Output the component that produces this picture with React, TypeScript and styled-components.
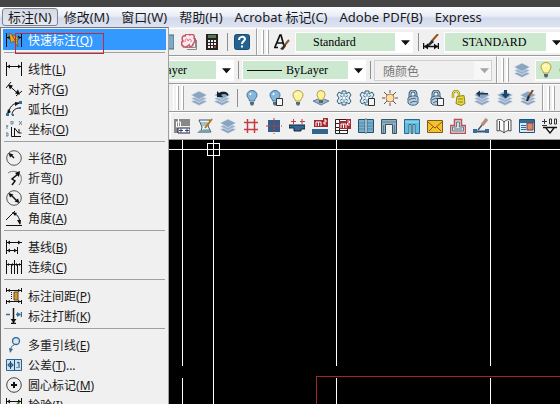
import React from "react";
import styled, { createGlobalStyle } from "styled-components";

const Global = createGlobalStyle`
  * { box-sizing: border-box; }
  body { margin: 0; background: #000; font-family: "Noto Sans", "Noto Sans CJK SC", sans-serif; font-size: 12px; color: #1a1a1a; overflow: hidden; }
  button, select { font: inherit; color: inherit; border: 0; padding: 0; margin: 0; background: none; }
  svg { display: block; flex: none; }
`;

const Page = styled.div`
  display: flex;
  flex-direction: column;
  height: 100vh;
  overflow: hidden;
  position: relative;
`;
const TitleStrip = styled.div`
  height: 7px;
  flex: none;
  background: #444;
`;
const MenuBar = styled.nav`
  display: flex;
  flex: none;
  height: 21px;
  padding: 1px 2px;
  white-space: nowrap;
  background: linear-gradient(#fbfcfe, #e9edf7 45%, #d3daec 55%, #dde3f2);
  border-bottom: 1px solid #f0f0f0;
`;
const MenuBarButton = styled.button<{ $open?: boolean }>`
  padding: 0 5px;
  font-size: 13px;
  line-height: 16px;
  border: 1px solid ${(p) => (p.$open ? "#7d8290" : "transparent")};
  border-radius: 3px;
  background: ${(p) => (p.$open ? "linear-gradient(#d5d9e4, #e6e9f2)" : "none")};
`;

const ToolRow = styled.div<{ $start: number }>`
  display: flex;
  flex: none;
  height: 28px;
  padding-left: ${(p) => p.$start}px;
  background: #f0f0f0;
  overflow: hidden;
  border-bottom: 1px solid #9a9a9a;
`;
const Panel = styled.div<{ $gap?: number; $grow?: boolean; $pad?: number }>`
  display: flex;
  flex: ${(p) => (p.$grow ? "1 0 auto" : "none")};
  align-items: center;
  gap: ${(p) => p.$gap ?? 7}px;
  padding: 0 ${(p) => (p.$gap === 4 ? 4 : 6)}px 0 ${(p) => p.$pad ?? 3}px;
  border-top: 1px solid #fff;
  border-left: 1px solid #fff;
  border-right: 1px solid #a0a0a0;
`;
const Grip = styled.span`
  display: block;
  flex: none;
  width: 8px;
  align-self: stretch;
  margin: 1px 0;
  background: linear-gradient(90deg, #fff 2px, #a5a5a5 2px 3px, #f0f0f0 3px 5px, #fff 5px 7px, #a5a5a5 7px);
`;
const Divider = styled.span`
  flex: none;
  width: 1px;
  height: 18px;
  margin-right: -1px;
  background: #8f8f8f;
`;
const ToolButton = styled.button`
  flex: none;
  width: 16px;
  height: 16px;
`;
const Combo = styled.label<{ $width?: number; $off?: boolean }>`
  display: flex;
  align-items: center;
  flex: ${(p) => (p.$width ? "none" : "1 0 120px")};
  width: ${(p) => (p.$width ? `${p.$width}px` : "auto")};
  height: 21px;
  padding-right: 2px;
  border: 1px solid ${(p) => (p.$off ? "#cfcfcf" : "#fff")};
  background: ${(p) => (p.$off ? "#f7f7f7" : "#fff")};
`;
const Field = styled.span<{ $off?: boolean; $indent: number }>`
  display: flex;
  align-items: center;
  gap: 4px;
  flex: 1;
  min-width: 0;
  height: 18px;
  margin-right: 6px;
  padding-left: ${(p) => p.$indent}px;
  background: ${(p) => (p.$off ? "#f0f0f0" : "#cce8cf")};
`;
const Select = styled.select<{ $off?: boolean }>`
  appearance: none;
  flex: 1;
  min-width: 0;
  height: 18px;
  font-family: ${(p) => (p.$off ? '"Noto Sans CJK SC", sans-serif' : '"Liberation Serif", serif')};
  font-size: 12px;
  color: ${(p) => (p.$off ? "#777" : "#000")};
  opacity: 1;
`;

const Menu = styled.ul`
  position: absolute;
  top: 27px;
  left: 0;
  width: 169px;
  margin: 0;
  padding: 1px 2px;
  list-style: none;
  background: #f0f0f0;
  border: 1px solid #777;
  border-right-color: #a0a0a0;
`;
const Item = styled.li`
  display: block;
`;
const ItemButton = styled.button<{ $active?: boolean }>`
  display: flex;
  align-items: center;
  gap: 6px;
  width: 100%;
  height: ${(p) => (p.$active ? 21 : 20)}px;
  padding-left: 3px;
  white-space: nowrap;
  text-align: left;
  color: ${(p) => (p.$active ? "#fff" : "#1a1a1a")};
  background: ${(p) => (p.$active ? "#3399ff" : "none")};
`;
const Rule = styled.li`
  height: 1px;
  margin: 2px 1px 6px;
  background: #a0a0a0;
`;
const Marker = styled.div`
  position: absolute;
  top: 33px;
  left: 15px;
  width: 89px;
  height: 21px;
  border: 1px solid #c8283c;
  pointer-events: none;
`;
const Canvas = styled.main`
  flex: 1;
  min-height: 0;
  overflow: hidden;
  background: #000;
`;

const k = "#111";
const layers = (
  <>
    <path d="M0 11.500l8-3.500 8 3.500-8 4z" fill="#8da5c2" stroke="#dfe8f1" strokeWidth=".6" />
    <path d="M0 8.500L8 5l8 3.500-8 4z" fill="#9cb2cc" stroke="#e8eff6" strokeWidth=".6" />
    <path d="M0 5l8-4 8 4-8 4.500z" fill="#8ba4bf" stroke="#e8eff6" strokeWidth=".6" />
  </>
);
const bulb = (fill: string, edge: string) => (
  <>
    <path d="M5.500 11C5.500 8.500 3 8 3 5a5 4.500 0 0 1 10 0c0 3-2.500 3.500-2.500 6z" fill={fill} stroke={edge} />
    <path d="M6 5l1-2" stroke="#fff" strokeWidth="1.500" />
    <path d="M6 12h4v2l-1 1.500H7L6 14z" fill="#54687c" />
  </>
);
const sheet = <path d="M9.500 8.500h6v7h-6z" fill="#f5f5f5" stroke="#333" />;
const snow = (
  <>
    <path d="M6 1h4v3l3-2 2 3-2 3 2 3-2 3-3-2v3H6v-3l-3 2-2-3 2-3-2-3 2-3 3 2z" fill="#dcebf3" stroke="#345a72" strokeWidth="1" />
    <path d="M8 3v10M4 5.500l8 5M4 10.500l8-5" stroke="#4d7c98" />
    <circle cx="8" cy="8" r="1.500" fill="#fff" />
  </>
);
const lock = (c: string, e: string) => (
  <>
    <path d="M5 8V4a3 3 0 0 1 6 0v4" fill="none" stroke={e} strokeWidth="3" />
    <path d="M5 8V4a3 3 0 0 1 6 0v4" fill="none" stroke={c} />
    <path d="M3 8c2-2 7-3 10-1v6c-2 3-8 3-10 0z" fill={c} stroke={e} />
    <path d="M4 10c3-2 5-2 7-1M5 13c3-2 5-2 7-1" stroke={e} fill="none" />
  </>
);
const dims = (
  <>
    <path d="M.5 1v14M15.500 1v14M1 5.500h14" stroke={k} fill="none" />
    <path d="M1 5.500l3-2v4zM15 5.500l-3-2v4z" fill={k} />
  </>
);

const icons: Record<string, React.ReactNode> = {
  quick: (
    <>
      {dims}
      <path d="M3 1l10 5-2 1 1 8-4-6-3 2z" fill="#e8aa22" stroke="#6a511d" strokeWidth=".7" />
      <path d="M6 3l4 7" stroke="#725314" />
    </>
  ),
  linear: dims,
  aligned: (
    <>
      <path d="M0 7l5-6M10 15l6-5M3 4.500l9 8" stroke={k} fill="none" />
      <path d="M2 3.500l5 1-3 4zM14 13.500l-5-1 3-4z" fill={k} />
    </>
  ),
  arc: (
    <>
      <path d="M6 14c0-4 3-7 8-7M3 12C3 6 7 2 13 2" stroke={k} fill="none" />
      <path d="M1 13l1-5 3 3zM14 2L9 1v4z" fill={k} />
      <path d="M0 12h3v3H0zM13 0h3v3h-3zM6 13h2v2H6zM13 6h2v2h-2z" fill="#326f9d" />
    </>
  ),
  ordinate: (
    <>
      <path d="M5.500 6v9.500H15M8.500 15V7l4 5h3M13 8v4" stroke={k} fill="none" />
      <path d="M0 4l1 2 1-2M1 6v2M5 0h2v3H5zM13 0l3 4M16 0l-3 4M0 12h2v3H0z" stroke="#3e6f92" fill="none" strokeWidth=".8" />
    </>
  ),
  radius: (
    <>
      <circle cx="8" cy="8" r="7.300" stroke="#555" fill="none" />
      <path d="M8 8L4 4" stroke={k} strokeWidth="1.500" />
      <path d="M2.500 3l5 1.500-3.500 3z" fill={k} />
    </>
  ),
  jogged: (
    <>
      <path d="M2 3c4-3 11-2 13 3 1 4 0 6-2 9" stroke="#777" fill="none" />
      <path d="M6 15l3-4-3-2 6-5" stroke={k} strokeWidth="1.500" fill="none" />
      <path d="M14 1l-1 6-4-4z" fill={k} />
    </>
  ),
  diameter: (
    <>
      <circle cx="8" cy="8" r="7.300" stroke="#555" fill="none" />
      <path d="M4 4l8 8" stroke={k} strokeWidth="1.500" />
      <path d="M2.500 3l5 1.500-3.500 3zM13.500 13l-5-1.500 3.500-3z" fill={k} />
    </>
  ),
  angular: (
    <>
      <path d="M0 15.500h16M0 10l9-9" stroke={k} fill="none" />
      <path d="M8 3c4 2 6 6 6 11" stroke={k} fill="none" />
      <path d="M6 2l5 1-2 3zM14 15l-3-5h4z" fill={k} />
    </>
  ),
  baseline: (
    <>
      <path d="M.5 1v14M1 3.500h15M1 11.500h10M11.500 8v7" stroke={k} fill="none" />
      <path d="M1 3.500l3-2v4zM15 3.500l-3-2v4zM1 11.500l3-2v4zM11 11.500l-3-2v4z" fill={k} />
    </>
  ),
  continued: (
    <>
      <path d="M.5 1v14M8.500 1v14M15.500 1v14M0 5.500h16M5.500 5v10M11.500 5v10" stroke={k} fill="none" />
      <path d="M1 5.500l2-1.500v3zM8 5.500l-2-1.500v3zM9 5.500l2-1.500v3zM15 5.500l-2-1.500v3z" fill={k} />
    </>
  ),
  spacing: (
    <>
      <path d="M.5 0v4M15.500 0v4M.5 12v4M15.500 12v4M1 2.500h14M1 13.500h14" stroke={k} />
      <path d="M5.500 4v8" stroke={k} strokeDasharray="1 1" />
      <path d="M8 4h4v8H8z" fill="#d49a32" stroke="#684a18" />
      <path d="M1 2.500l3-1.500v3zM15 2.500L12 1v3zM1 13.500L4 12v3zM15 13.500L12 12v3z" fill={k} />
    </>
  ),
  breakdim: (
    <>
      <path d="M7.500 0v15M5 15.500h5" stroke={k} strokeWidth="1.500" />
      <path d="M4.500 11h6l-3 4z" fill={k} />
      <path d="M0 6.500h4M10 6.500h4M15.500 4v5" stroke="#396e91" strokeWidth="1.500" />
      <path d="M15 6.500l-4-2.500v5z" fill="#396e91" />
    </>
  ),
  leader: (
    <>
      <circle cx="10" cy="4" r="3.500" stroke="#356790" fill="#d5e6f2" strokeWidth="1.300" />
      <path d="M8 8c-3 1-3 3-3 5" stroke="#356790" fill="none" />
      <path d="M3 11l4 1-3 4z" fill="#356790" />
    </>
  ),
  tolerance: (
    <>
      <path d="M.5 2.500h15v11H.5z" fill="#cde2f2" stroke="#2d638c" />
      <path d="M8.500 3v10M4.500 4v8M1.500 8h6M13 5v6M11 6l2-1M10.500 10.500h1" stroke="#1f4e73" />
      <circle cx="4.500" cy="8" r="2" stroke="#1f4e73" fill="none" />
    </>
  ),
  center: (
    <>
      <circle cx="8" cy="8" r="7.300" stroke="#444" fill="none" />
      <path d="M8 5v6M5 8h6" stroke={k} strokeWidth="2" />
    </>
  ),
  inspect: (
    <>
      <path d="M.5 1v14M15.500 1v14M1 4.500h14" stroke={k} />
      <path d="M1 4.500l3-2v4zM15 4.500l-3-2v4z" fill={k} />
      <path d="M4 9l3 4 6-7" stroke="#4a9b2f" strokeWidth="3" fill="none" />
    </>
  ),
  block: <path d="M0 1h16v14H0z" fill="#7fa9c4" stroke="#3d6d8c" />,
  cloud: (
    <>
      <path d="M4 13.500h10.500V4M6 15.500h9.500V6" stroke="#888" fill="none" />
      <path d="M2 12C0 11 0 8 2 7 0 4 2 1 4 2c1-3 4-2 5-1 3-2 5 1 4 3 2 2 0 5-1 6 0 3-4 3-4 1-2 2-6 3-6 1z" fill="#fce9ec" stroke="#c94f62" strokeWidth="1.500" />
      <path d="M4 8c0-4 3-4 3-1 1-3 4-2 3 1" stroke="#d4707f" fill="none" />
    </>
  ),
  calc: (
    <>
      <path d="M2 0h12v16H2z" fill="#26201f" />
      <path d="M4 1h8v3H4z" fill="#527c55" />
      <path d="M4 6h2v2H4zM7 6h2v2H7zM10 6h2v2h-2zM4 9h2v2H4zM7 9h2v2H7zM10 9h2v2h-2zM4 12h2v2H4zM7 12h2v2H7z" fill="#eee" />
      <path d="M10 12h2v2h-2z" fill="#b23a3a" />
    </>
  ),
  help: (
    <>
      <rect x=".5" y=".5" width="15" height="15" rx="2" fill="#246391" stroke="#1b4b70" />
      <path d="M5 6c0-4 6-4 6-1 0 2-3 2-3 5M8 11.500v2" stroke="#fff" strokeWidth="2" fill="none" />
    </>
  ),
  textstyle: (
    <>
      <path d="M1 13L6 1h1l3 11M3 9h6M0 13.500h4" stroke={k} strokeWidth="1.700" fill="none" />
      <path d="M15 6l-5 6" stroke="#8b5a2b" strokeWidth="2" />
      <path d="M11 10l1 2-3 4-3-1z" fill="#332b24" />
    </>
  ),
  dimstyle: (
    <>
      <path d="M15 0L8 8" stroke="#95521f" strokeWidth="2" />
      <path d="M9 6l2 2-6 5-3 0z" fill="#292929" />
      <path d="M.5 9v6M15.500 9v6M1 12.500h14" stroke={k} strokeWidth="1.500" />
      <path d="M1 12.500l4-3v6zM15 12.500l-4-3v6z" fill={k} />
    </>
  ),
  layers,
  layerprev: (
    <>
      {layers}
      <path d="M3 1v6h6L7 5c3-2 5-1 7 1 2-3-4-6-9-3z" fill="#17202d" />
    </>
  ),
  bulb: bulb("#86b7d8", "#42779d"),
  bulbbox: (
    <>
      {bulb("#86b7d8", "#42779d")}
      {sheet}
    </>
  ),
  bulbon: bulb("#fff4a0", "#aaa247"),
  bulblayer: (
    <>
      <path d="M0 11l8-3 8 3-8 4z" fill="#9db2c9" stroke="#607c9b" />
      <path d="M6 10C6 8 4 7 4 4.500a4 4 0 0 1 8 0C12 7 10 8 10 10z" fill="#fff09a" stroke="#aaa247" />
      <path d="M6 10h4v3H6z" fill="#54687c" />
    </>
  ),
  snow,
  snowbox: (
    <>
      {snow}
      {sheet}
    </>
  ),
  sun: (
    <>
      <path d="M8 0v3M8 13v3M0 8h3M13 8h3M2 2l3 3M11 11l3 3M2 14l3-3M11 5l3-3" stroke="#655348" />
      <circle cx="8" cy="8" r="4" fill="#ffdda6" stroke="#b37a4e" />
    </>
  ),
  lock: lock("#b9cddd", "#3d6384"),
  lockbox: (
    <>
      {lock("#b9cddd", "#3d6384")}
      {sheet}
    </>
  ),
  unlock: (
    <>
      <path d="M2 8V4a3 3 0 0 1 6 0v4" fill="none" stroke="#9a8f22" strokeWidth="2.500" />
      <path d="M2 8V4a3 3 0 0 1 6 0v4" fill="none" stroke="#f2e65b" />
      <path d="M6 6.500l7-1 1 8-4 2-5-2z" fill="#e8da44" stroke="#8c8120" />
      <path d="M7 9h5M7 12h5" stroke="#8c8120" />
    </>
  ),
  layerleft: (
    <>
      {layers}
      <path d="M2 3.500l4-3V3h8v1.500H6V7z" fill="#20364b" />
    </>
  ),
  layerdown: (
    <>
      {layers}
      <path d="M7 0h3v4h3L8.500 8.500 4 4h3z" fill="#174468" />
    </>
  ),
  layerbrush: (
    <>
      {layers}
      <path d="M13 0L9 6" stroke="#85481f" strokeWidth="2" />
      <path d="M8 5l2 2-2 4H6z" fill="#282828" />
    </>
  ),
  axis: (
    <>
      <path d="M0 1h16v7H0zM0 8h5v7H0z" fill="#888" />
      <path d="M4.500 0v12M2.500 4v5h4V4z" stroke="#fff" fill="none" />
      <path d="M4 10h12v5H4z" fill="#fff" stroke="#222" />
      <path d="M5 12.500h4M7 10.500v4M11 12.500h4M13 10.500v4" stroke="#2540a5" />
    </>
  ),
  scroll: (
    <>
      <path d="M2 2h11l-2 6 3 6H4l1-5z" fill="#eef5f3" stroke="#3a5664" />
      <path d="M4 5h7M5 7h5M6 12h6" stroke="#608894" />
      <path d="M0 15l3-3h11l-2 3z" fill="#76a2ad" />
      <path d="M15 1L8 10" stroke="#b87722" strokeWidth="2" />
    </>
  ),
  grid: <path d="M4.500 1v14M11.500 1v14M1 4.500h14M1 11.500h14" stroke="#c33b40" strokeWidth="1.500" />,
  column: (
    <>
      <path d="M2 2h12v12H2z" fill="#315d89" />
      <path d="M8 0v16M0 8h16" stroke="#bd3945" strokeDasharray="4 1" />
    </>
  ),
  beam: (
    <>
      <path d="M0 7h16v4h-4v2H5v-3H0z" fill="#326796" stroke="#182737" />
      <path d="M4.500 1v5M2 3.500h5M13 1v5M11 3.500h5" stroke="#c33b40" />
    </>
  ),
  area: (
    <>
      <path d="M0 11h16v5H0z" fill="#32658e" />
      <path d="M2 2h9V0h5v9H2z" fill="#a42832" />
      <path d="M4 8V4h5v4M6.500 4v4M12 2h2v2h-2v2h2" stroke="#fff" fill="none" />
    </>
  ),
  areatable: (
    <>
      <path d="M.5 1.500h12v14H.5zM.5 5.500h12M.5 9.500h12M.5 12.500h12M4.500 1v14" fill="#fff" stroke="#222" />
      <path d="M4 3h7V1h5v10H4z" fill="#a42832" />
      <path d="M6 10V6h5v4M8.500 6v4M12.500 3h2v2h-2v2h2" stroke="#fff" fill="none" />
    </>
  ),
  wall: (
    <>
      <path d="M.5 1.500h15v13H.5z" fill="#76b1ce" stroke="#284f68" />
      <path d="M1 5h14M1 8h14M1 11h14" stroke="#4d87a7" />
      <path d="M7 1h2v14H7z" fill="#e7f2f8" stroke="#284f68" strokeWidth=".7" />
    </>
  ),
  door: (
    <>
      <path d="M.5 1.500h15v14h-4v-9h-7v9h-4z" fill="#8fb0c2" stroke="#385262" />
      <path d="M1 4h14M2.500 7v8M13.500 7v8" stroke="#5e7d90" />
    </>
  ),
  opening: (
    <>
      <path d="M.5 1.500h15v14H11v-9H9v9H7v-9H5v9H.5z" fill="#63bce0" stroke="#276886" />
      <path d="M1 4h14" stroke="#a8e0f4" />
    </>
  ),
  mail: (
    <>
      <path d="M.5 2.500h15v12H.5z" fill="#f0c528" stroke="#845919" />
      <path d="M1 4l7 6 7-6M2 13l4-4M14 13l-4-4" stroke="#a44718" fill="none" />
    </>
  ),
  stair: (
    <>
      <path d="M4.500 1.500h7v6h4v8H.5v-8h4z" fill="#d9dfe3" stroke="#bb5055" strokeWidth="1.500" />
      <path d="M6.500 4h3v5h4v4h-11V9h4zM4 11h8" stroke="#637787" fill="none" />
    </>
  ),
  probe: (
    <>
      <path d="M1 13.500h14" stroke="#2c5a83" strokeWidth="2" />
      <path d="M0 11h4v4H0zM12 11h4v4h-4z" fill="#356d9f" />
      <path d="M14 1L9 7" stroke="#b58e80" strokeWidth="3.500" />
      <path d="M9 7l-4 5" stroke="#555" strokeWidth="1.500" />
    </>
  ),
  book: <path d="M8 14V4C6 1 3 1 1 2v11c3-1 5 0 7 2 2-2 4-3 7-2V2c-3-1-5 0-7 2M3.500 3v9M12.500 3v9" fill="#fafafa" stroke="#4c4c4c" />,
  detail: (
    <>
      <path d="M.5 1.500h15v13H.5z" fill="#d6e9f4" stroke="#24506f" />
      <path d="M1 2h14v3H1z" fill="#2e6e9c" />
      <path d="M2 7.500h5M2 9.500h5M2 11.500h5" stroke="#2e6e9c" />
      <path d="M8 5h6v7H8z" fill="#d98c6c" stroke="#843f2f" />
    </>
  ),
  level: (
    <>
      <path d="M0 3.500h5M2.500 1v5M0 7.500h5M7.500 1h2v5h-2zM12.500 1h2v5h-2z" stroke="#333" fill="none" />
      <path d="M1 9.500h14M4 10l4 5 4-5" stroke={k} fill="#fff" strokeWidth="1.300" />
    </>
  ),
  yellow: <circle cx="8" cy="8" r="6" fill="#f5e84c" stroke="#9b922c" />,
  arrow: <path d="M0 4h16L8 13z" fill="#111" />,
  arrowoff: <path d="M0 4h16L8 13z" fill="#a5a5a5" />,
  stroke: <path d="M0 8.500h16" stroke="#111" />,
};

function Icon({ name, width = 16, height = 16 }: { name: string; width?: number; height?: number }) {
  return (
    <svg width={width} height={height} viewBox="0 0 16 16" preserveAspectRatio={name === "stroke" ? "none" : "xMidYMid meet"} aria-hidden="true">
      {icons[name]}
    </svg>
  );
}

function Tools({ names }: { names: string[] }) {
  return (
    <>
      {names.map((n) => (
        <ToolButton key={n} type="button" aria-label={n}>
          <Icon name={n} />
        </ToolButton>
      ))}
    </>
  );
}

function Picker({ label, value, width, indent, off, lead }: { label: string; value: string; width?: number; indent: number; off?: boolean; lead?: React.ReactNode }) {
  return (
    <Combo $width={width} $off={off}>
      <Field $off={off} $indent={indent}>
        {lead}
        <Select aria-label={label} disabled={off} $off={off}>
          <option>{value}</option>
        </Select>
      </Field>
      <Icon name={off ? "arrowoff" : "arrow"} width={9} height={9} />
    </Combo>
  );
}

type Entry = [icon: string, text: string, key: string, tail?: string];
const groups: Entry[][] = [
  [["quick", "快速标注", "Q"]],
  [["linear", "线性", "L"], ["aligned", "对齐", "G"], ["arc", "弧长", "H"], ["ordinate", "坐标", "O"]],
  [["radius", "半径", "R"], ["jogged", "折弯", "J"], ["diameter", "直径", "D"], ["angular", "角度", "A"]],
  [["baseline", "基线", "B"], ["continued", "连续", "C"]],
  [["spacing", "标注间距", "P"], ["breakdim", "标注打断", "K"]],
  [["leader", "多重引线", "E"], ["tolerance", "公差", "T", "..."], ["center", "圆心标记", "M"], ["inspect", "检验", "I"]],
];
const menus = ["标注(N)", "修改(M)", "窗口(W)", "帮助(H)", "Acrobat 标记(C)", "Adobe PDF(B)", "Express"];

export default function App() {
  return (
    <Page>
      <Global />
      <TitleStrip />
      <MenuBar>
        {menus.map((m, i) => (
          <MenuBarButton key={m} type="button" $open={i === 0}>
            {m}
          </MenuBarButton>
        ))}
      </MenuBar>

      <ToolRow $start={154}>
        <Panel>
          <Tools names={["block", "cloud", "calc"]} />
          <Divider />
          <Tools names={["help"]} />
        </Panel>
        <Panel $gap={5} $grow>
          <Grip />
          <Tools names={["textstyle"]} />
          <Picker label="文字样式" value="Standard" width={118} indent={17} />
          <Divider />
          <Tools names={["dimstyle"]} />
          <Picker label="标注样式" value="STANDARD" indent={17} />
        </Panel>
      </ToolRow>

      <ToolRow $start={96}>
        <Panel $gap={4}>
          <Picker label="颜色" value="ByLayer" width={134} indent={44} />
          <Divider />
          <Picker label="线型" value="ByLayer" width={124} indent={4} lead={<Icon name="stroke" width={35} />} />
          <Divider />
          <Picker label="打印样式" value="随颜色" width={118} indent={8} off />
        </Panel>
        <Panel $gap={5} $grow>
          <Grip />
          <Tools names={["layers"]} />
          <Picker label="图层" value="0" indent={2} lead={<><Icon name="bulbon" /><Icon name="yellow" /></>} />
        </Panel>
      </ToolRow>

      <ToolRow $start={173}>
        <Panel $pad={2}>
          <Grip />
          <Tools names={["layers", "layerprev"]} />
          <Divider />
          <Tools
            names={["bulb", "bulbbox", "bulbon", "bulblayer", "snow", "snowbox", "sun", "lock", "lockbox", "unlock", "layerleft", "layerdown", "layerbrush"]}
          />
        </Panel>
        <Panel $grow>
          <Grip />
        </Panel>
      </ToolRow>

      <ToolRow $start={170}>
        <Panel $grow>
          <Tools
            names={["axis", "scroll", "layers", "grid", "column", "beam", "area", "areatable", "wall", "door", "opening", "mail", "stair", "probe", "book", "detail", "level"]}
          />
        </Panel>
      </ToolRow>

      <Canvas>
        <svg width="100%" height="100%" shapeRendering="crispEdges" role="img" aria-label="绘图区">
          <g stroke="#fff" fill="none">
            <path d="M182.500 0V226M182.500 238V2000M213.500 0V2000M336.500 0V226M336.500 238V2000M490.500 0V226M490.500 238V2000M0 9.500H4000" />
            <path d="M207.500 3.500h12v12h-12z" />
          </g>
          <path d="M316.500 2000V236.500H4000" stroke="#a82424" fill="none" />
        </svg>
      </Canvas>

      <Menu>
        {groups.map((g, gi) => (
          <React.Fragment key={gi}>
            {gi > 0 && <Rule role="separator" />}
            {g.map(([icon, text, key, tail]) => (
              <Item key={key}>
                <ItemButton type="button" $active={icon === "quick"}>
                  <Icon name={icon} />
                  <span>
                    {text}(<u>{key}</u>){tail}
                  </span>
                </ItemButton>
              </Item>
            ))}
          </React.Fragment>
        ))}
      </Menu>
      <Marker />
    </Page>
  );
}
